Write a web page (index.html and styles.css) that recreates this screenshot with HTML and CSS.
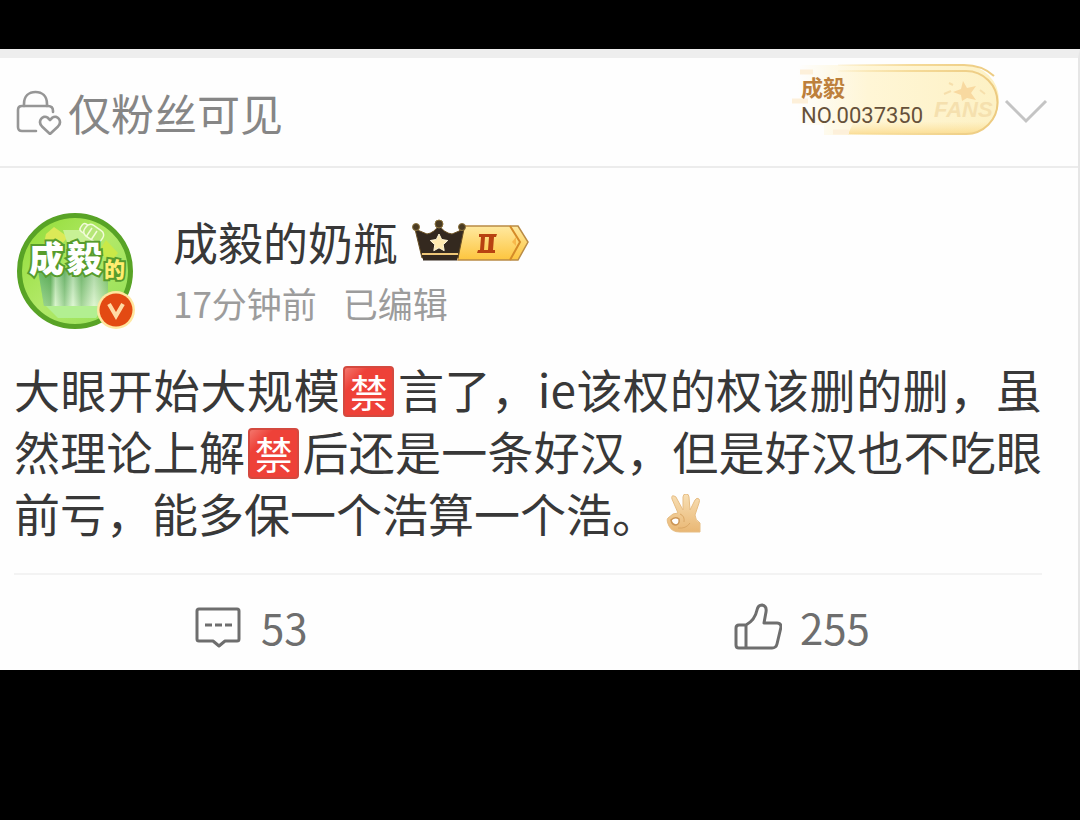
FILE: index.html
```
<!DOCTYPE html>
<html lang="zh-CN">
<head>
    <meta charset="UTF-8">
    <meta name="viewport" content="width=device-width, initial-scale=1.0">
    <title>成毅的奶瓶</title>
    <link rel="stylesheet" href="styles.css">
</head>
<body>

    <main class="card">
        <header class="topbar">
            <svg class="lock-icon" viewBox="0 0 46 46" fill="none" stroke="#969696" stroke-width="2.6" stroke-linecap="round" stroke-linejoin="round">
                <path d="M8 17v-2C8 7 13 3 19.500 3S31 7 31 15v2"/>
                <path d="M20 42H6q-4 0-4-4V21q0-4 4-4h26q5 0 5 5v1"/>
                <path d="M34 45L26 37.500C21 32 27 25.500 31.500 28.500L34 31l2.500-2.500C41 25.500 47 32 42 37.500z"/>
            </svg>
            <span class="visibility">仅粉丝可见</span>
            <div class="fans-badge">
                <svg class="badge-art" viewBox="0 0 214 74" fill="none">
                    <defs>
                        <linearGradient id="fade" x1="0" x2="1" y1="0" y2="0">
                            <stop offset="0" stop-color="#fff3cf" stop-opacity="0"/>
                            <stop offset=".35" stop-color="#fff6d6"/>
                            <stop offset="1" stop-color="#fdf1c4"/>
                        </linearGradient>
                        <linearGradient id="glow" x1="0" x2="0" y1="0" y2="1">
                            <stop offset=".4" stop-color="#fbdc8c" stop-opacity="0"/>
                            <stop offset="1" stop-color="#fad47c"/>
                        </linearGradient>
                        <linearGradient id="edge" gradientUnits="userSpaceOnUse" x1="40" x2="210" y1="0" y2="0">
                            <stop offset="0" stop-color="#f5da98" stop-opacity="0"/>
                            <stop offset=".5" stop-color="#f5da98"/>
                            <stop offset="1" stop-color="#ecca80"/>
                        </linearGradient>
                    </defs>
                    <path d="M10 2H176A34 34 0 0 1 176 72H36V62H10z" fill="url(#fade)"/>
                    <path d="M70 50H206Q200 71 178 71H60z" fill="url(#glow)" opacity=".7"/>
                    <path d="M50 2H176Q194 2 206 13M50 8H178A31.500 31.500 0 0 1 178 71H60" stroke="url(#edge)" stroke-width="2"/>
                    <path d="M12 9h13M4 38h16M45 69h16" stroke="#fdf0da" stroke-width="5"/>
                    <path d="M175 18l4 7 9-2-5 7 5 7-9-2-5 3-1-6-8-3 8-3z" fill="#f8d9a0"/>
                    <path d="M156 31l7-3M192 27l5 4M161 20l4 2" stroke="#f6dfac" stroke-width="2"/>
                    <text class="fans-word" x="146" y="54">FANS</text>
                </svg>
                <span class="fans-name">成毅</span>
                <span class="fans-number">NO.0037350</span>
            </div>
            <button class="more" type="button" aria-label="更多">
                <svg viewBox="0 0 44 26" fill="none" stroke="#c4c4c4" stroke-width="3"><path d="M2 2l20 20L42 2"/></svg>
            </button>
        </header>

        <section class="author">
            <a class="avatar" href="#" aria-label="成毅的奶瓶">
                <svg viewBox="0 0 120 120">
                    <defs>
                        <linearGradient id="green" x1="0" x2="1" y1="0" y2="1">
                            <stop offset="0" stop-color="#8edb32"/>
                            <stop offset=".5" stop-color="#b2e968"/>
                            <stop offset="1" stop-color="#91df55"/>
                        </linearGradient>
                        <linearGradient id="blurred" x1="0" x2="1" y1="0" y2="0">
                            <stop offset="0" stop-color="#7cc878"/>
                            <stop offset=".18" stop-color="#5eac58"/>
                            <stop offset=".25" stop-color="#dcf5d4"/>
                            <stop offset=".38" stop-color="#79b978"/>
                            <stop offset=".5" stop-color="#e4f7df"/>
                            <stop offset=".62" stop-color="#83bf7d"/>
                            <stop offset=".8" stop-color="#e5f6dc"/>
                            <stop offset="1" stop-color="#8dcc76"/>
                        </linearGradient>
                        <linearGradient id="down" x1="0" x2="0" y1="0" y2="1">
                            <stop offset="0" stop-color="#4ea24c" stop-opacity=".4"/>
                            <stop offset="1" stop-color="#d8f6c4" stop-opacity=".4"/>
                        </linearGradient>
                    </defs>
                    <circle cx="59" cy="59" r="55.500" fill="url(#green)" stroke="#58a326" stroke-width="5"/>
                    <path d="M30 22l8-7 14 10-8 9-18 6z" fill="#dce957"/>
                    <path d="M47 18h28l8 12-30 6z" fill="#c8f195"/>
                    <path d="M90 28l12 13-6 8-14-8z" fill="#c9e948"/>
                    <g fill="#b5e678" stroke="#f2fbd9" stroke-width="1.500">
                        <rect x="65" y="12" width="9" height="9" rx="3" transform="rotate(35 69 16)"/>
                        <rect x="68" y="15" width="20" height="13" rx="5" transform="rotate(35 78 21)"/>
                        <path d="M76 16l-6 9M81 19l-6 9"/>
                    </g>
                    <path d="M22 58H92V94H28z" fill="url(#blurred)"/>
                    <path d="M22 58H92V94H28z" fill="url(#down)"/>
                    <path d="M30 94h58l-8 12H42z" fill="#b2ef91"/>
                    <text class="avatar-main" x="13" y="60">成</text>
                    <text class="avatar-main" x="51" y="60">毅</text>
                    <text class="avatar-small" x="88" y="65">的</text>
                    <circle cx="100" cy="98" r="19" fill="#ffe7a0"/>
                    <circle cx="100" cy="98" r="16.500" fill="#e34a13"/>
                    <path d="M93 92l7 12 7-12" fill="none" stroke="#ffdba5" stroke-width="4"/>
                </svg>
            </a>
            <div class="author-info">
                <div class="name-row">
                    <a class="name" href="#">成毅的奶瓶</a>
                    <svg class="vip" viewBox="0 0 120 48">
                        <defs>
                            <linearGradient id="gold" x1="0" x2="0" y1="0" y2="1">
                                <stop offset="0" stop-color="#ffe9a0"/>
                                <stop offset="1" stop-color="#fdc53e"/>
                            </linearGradient>
                        </defs>
                        <path d="M48 8H106L116 24 106 42H46z" fill="url(#gold)" stroke="#b98b45" stroke-width="1.500"/>
                        <path d="M98 8l10 16-10 18" fill="none" stroke="#d48a28" stroke-width="2"/>
                        <path d="M104 19l-4 5 4 4" fill="#f8b84a"/>
                        <path d="M67 16h18l-1 3h-2l-1 13h2v3H65l1-3h2l1-13h-2zM73 19l-1 13h4l1-13z" fill="#b84211" fill-rule="evenodd"/>
                        <path d="M3 11l12 5q7-1 12-9 5 8 13 9l12-5-6 29H10z" fill="#34291f" stroke="#6b5124" stroke-width="1"/>
                        <path d="M10 36h36" stroke="#efc778" stroke-width="2"/>
                        <path d="M11 40h34" stroke="#34291f" stroke-width="5"/>
                        <g fill="#4a3b22" stroke="#8b723c" stroke-width="1">
                            <circle cx="4" cy="9" r="3.500"/><circle cx="27" cy="6" r="4"/><circle cx="50" cy="9" r="3.500"/>
                        </g>
                        <path d="M27 16l2.700 5.500 6 1-4.500 4.200 1 6-5.200-2.900-5.200 2.900 1-6-4.500-4.200 6-1z" fill="#ffeab0" stroke="#fff6d8" stroke-width="1"/>
                    </svg>
                </div>
                <div class="meta"><span>17分钟前</span><span>已编辑</span></div>
            </div>
        </section>

        <p class="post">大眼开始大规模<span class="ban">禁</span>言了，ie该权的权该删的删，虽然理论上解<span class="ban">禁</span>后还是一条好汉，但是好汉也不吃眼前亏，能多保一个浩算一个浩。<svg class="ok-hand" viewBox="0 0 36 40" role="img" aria-label="OK">
            <defs>
                <linearGradient id="skin" x1="0" x2="0" y1="0" y2="1">
                    <stop offset="0" stop-color="#f8dfb4"/>
                    <stop offset="1" stop-color="#e9b774"/>
                </linearGradient>
            </defs>
            <path d="M12 19L6 5Q5 1 8 2q2 0 3 3l6 11L17 3q0-3 3-3t3 3l1 13 5-10q2-3 4-1 1 1 0 4l-4 12q0 5 5 8v9H14Q6 38 3 32 0 26 2 24l5-4z" fill="url(#skin)" stroke="#e6bd84" stroke-width="1"/>
            <path d="M5 26q4-4 8-1 1 5-3 6-4 0-5-5z" fill="#fff" stroke="#cd9656" stroke-width="1.500"/>
            <path d="M14 20q5 2 4 8M12 34q8 1 12-5" fill="none" stroke="#dba866" stroke-width="1"/>
        </svg></p>

        <footer class="actions">
            <button type="button" aria-label="评论 53">
                <svg viewBox="0 0 48 48" fill="none" stroke="#6e6e6e" stroke-width="3" stroke-linejoin="round">
                    <path d="M4 6H42q2 0 2 2V36q0 2-2 2H30l-6 5-6-5H4q-2 0-2-2V8q0-2 2-2z"/>
                    <path d="M10 22h7M20 22h7M30 22h7"/>
                </svg>
                <span>53</span>
            </button>
            <button type="button" aria-label="赞 255">
                <svg viewBox="0 0 48 48" fill="none" stroke="#6e6e6e" stroke-width="3" stroke-linejoin="round">
                    <path d="M12 22Q21 17 23 7q1-5 5-5 5 1 4 7l-2 11H43q4 0 4 4l-4 17q-1 4-5 4H5q-3 0-3-3V25q0-3 3-3zM12 22V45"/>
                </svg>
                <span>255</span>
            </button>
        </footer>
    </main>

</body>
</html>
```
FILE: styles.css
```
* {
    margin: 0;
    padding: 0;
    box-sizing: border-box;
}

body {
    background: #000;
    font-family: "Noto Sans CJK SC", sans-serif;
    color: #383838;
}

a {
    color: inherit;
    text-decoration: none;
}

button {
    border: none;
    background: none;
    font: inherit;
    color: inherit;
    cursor: pointer;
}

svg {
    display: block;
    flex: none;
}

.card {
    margin-top: 49px;
    background: #fefefe;
    border-top: 9px solid #eee;
    border-right: 2px solid #e6e6e6;
}

.topbar {
    display: flex;
    align-items: center;
    height: 110px;
    padding: 0 30px 0 16px;
    border-bottom: 2px solid #ececec;
}

.lock-icon {
    width: 46px;
    height: 46px;
}

.visibility {
    margin-left: 6px;
    font-size: 43px;
    line-height: 60px;
    color: #868686;
}

.fans-badge {
    position: relative;
    display: flex;
    flex-direction: column;
    width: 214px;
    height: 74px;
    margin: 0 2px 24px auto;
    padding: 8px 0 0 13px;
}

.badge-art {
    position: absolute;
    inset: 0;
}

.fans-word {
    font: italic bold 22px "Liberation Sans", sans-serif;
    fill: #f5e0ae;
}

.fans-name,
.fans-number {
    position: relative;
    font-size: 22px;
    line-height: 30px;
}

.fans-name {
    font-weight: bold;
    color: #bd803c;
}

.fans-number {
    font-family: Roboto, sans-serif;
    color: #66513a;
}

.more svg {
    width: 44px;
    height: 26px;
}

.author {
    display: flex;
    padding: 44px 16px 0;
}

.avatar svg {
    width: 120px;
    height: 120px;
}

.avatar-main,
.avatar-small {
    font-weight: 900;
    fill: #fff;
    stroke: #579c2d;
    stroke-width: 4px;
    paint-order: stroke;
}

.avatar-main {
    font-size: 35px;
}

.avatar-small {
    font-size: 21px;
    fill: #ffed70;
}

.author-info {
    margin-left: 37px;
}

.name-row {
    display: flex;
    align-items: center;
    gap: 14px;
}

.name {
    font-size: 45px;
    line-height: 60px;
}

.vip {
    width: 120px;
    height: 48px;
}

.meta {
    display: flex;
    gap: 26px;
    font-size: 35px;
    line-height: 62px;
    color: #9c9c9c;
}

.post {
    margin: 23px 36px 0 14px;
    padding-bottom: 30px;
    border-bottom: 2px solid #f3f3f3;
    font-size: 46px;
    line-height: 62px;
    text-align: justify;
}

.ban {
    display: inline-block;
    width: 51px;
    height: 51px;
    margin: 9px 3px 0;
    border: 2px solid #d4493f;
    border-radius: 4px;
    background: linear-gradient(135deg, #f3766c, #ee4138 25%);
    color: #fff;
    font-size: 38px;
    line-height: 45px;
    text-align: center;
    vertical-align: top;
}

.ok-hand {
    display: inline-block;
    width: 36px;
    height: 40px;
    margin-left: 8px;
    vertical-align: -2px;
}

.actions {
    display: grid;
    grid-template-columns: 1fr 1fr;
    color: #6e6e6e;
    font-size: 42px;
    line-height: 62px;
}

.actions button {
    display: flex;
    align-items: center;
    gap: 18px;
    padding: 21px 0 12px 195px;
}

.actions svg {
    width: 48px;
    height: 48px;
}
```
